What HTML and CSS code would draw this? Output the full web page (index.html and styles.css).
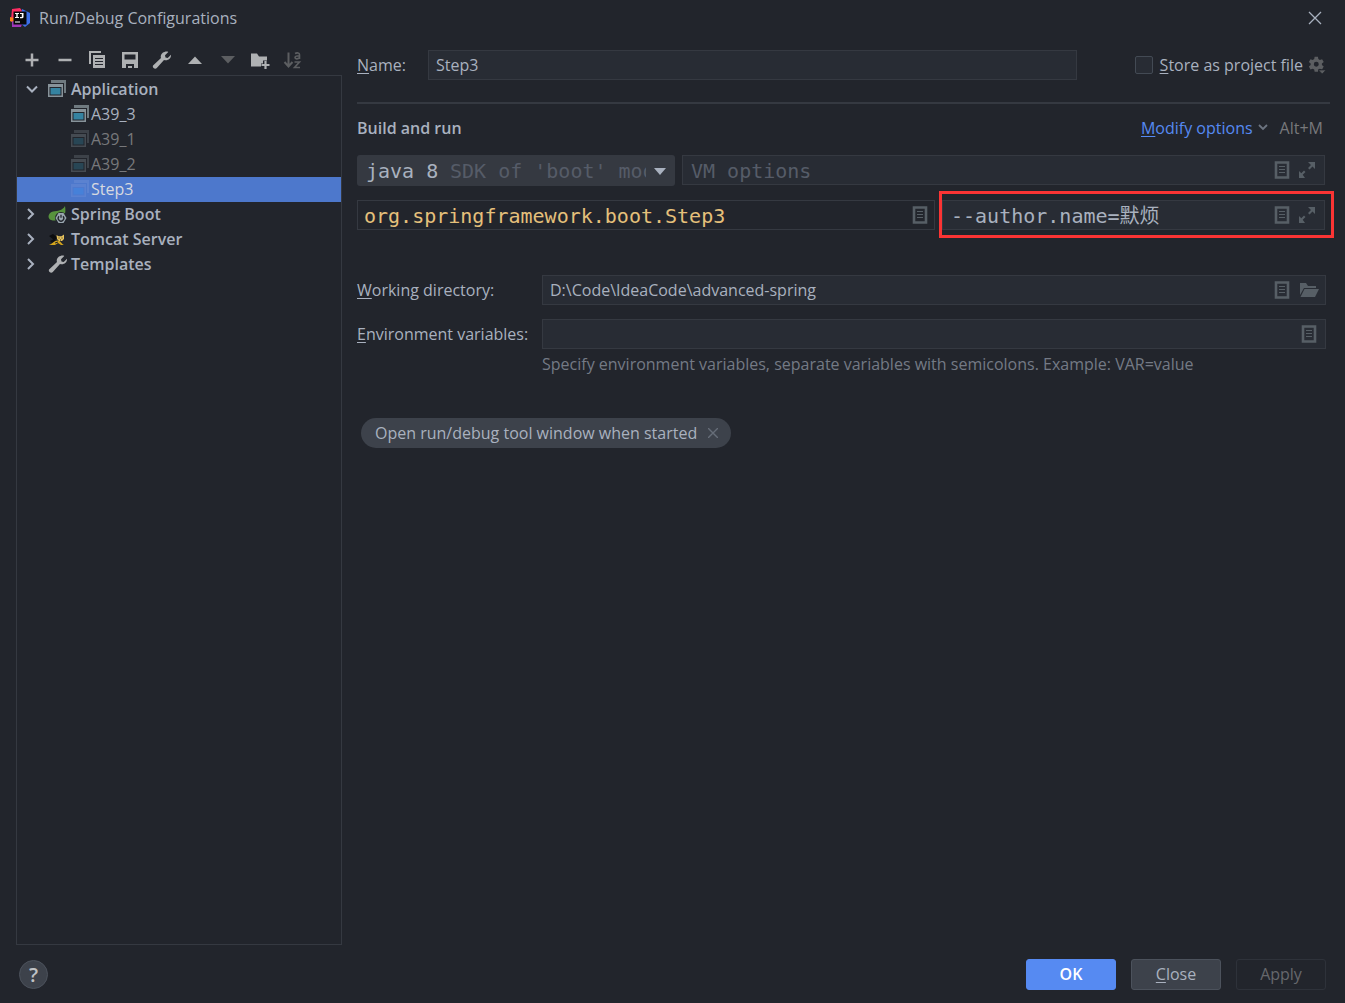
FILE: index.html
```html
<!DOCTYPE html>
<html lang="en">
<head>
<meta charset="utf-8">
<title>Run/Debug Configurations</title>
<link rel="stylesheet" href="styles.css">
</head>
<body>
<svg class="sprite" aria-hidden="true">
  <symbol id="i-doc" viewBox="0 0 20 20"><path d="M4 2.500h12v15h-12z" fill="none" stroke="currentColor" stroke-width="2.600"/><path d="M7 6.500h6M7 9.500h6M7 12.500h6" stroke="currentColor" stroke-width="1"/></symbol>
  <symbol id="i-expand" viewBox="0 0 20 20"><path d="M11 2h7v7l-2.500-2.500-3 3-1.500-1.500 3-3zM2 18v-7l2.300 2.300 2.700-2.800 1.500 1.500-2.800 2.700L8 18z" fill="currentColor"/></symbol>
  <symbol id="i-folder" viewBox="0 0 20 20"><path d="M1 15V3h6l2 3h8v2H5z" fill="currentColor"/><path d="M5.500 9H20l-4 8H1.500z" fill="currentColor"/></symbol>
  <symbol id="i-wrench" viewBox="0 0 20 20"><path d="M13.500 2C15 1.300 16.500 1.500 17.300 2l-3.300 3.300.5 2.200 2.200.5L20 4.800c.4 4-3.500 6.500-7 5.200L5.800 18c-1.800 2-5.300-.8-3.500-2.800L10 8C9 5.500 10.800 2.600 13.500 2z" transform="translate(-1 0)" fill="currentColor"/></symbol>
  <symbol id="i-app" viewBox="0 0 20 20"><path d="M3 1h15v13h-2V4H3z" fill="#6f7a80"/><path d="M0 5h15v13H0z" fill="#87939a"/><path d="M1.500 8h12v8.500h-12z" fill="#22252c"/><path d="M2.500 9h10v6.500h-10z" fill="#3583a1"/></symbol>
  <symbol id="i-app-sel" viewBox="0 0 20 20"><path d="M3 1h15v13h-2V4H3z" fill="#5b82d0"/><path d="M0 5h15v13H0z" fill="#5a81d0"/><path d="M1.500 8h12v8.500h-12z" fill="#4e79ce"/><path d="M2.500 9h10v6.500h-10z" fill="#4681d9"/></symbol>
  <symbol id="i-right" viewBox="0 0 16 16"><path d="M4 3l5 5-5 5" fill="none" stroke="currentColor" stroke-width="2"/></symbol>
  <symbol id="i-down" viewBox="0 0 16 16"><path d="M3 5.500l5 5 5-5" fill="none" stroke="currentColor" stroke-width="2"/></symbol>
</svg>

<header class="titlebar">
  <svg class="logo" viewBox="0 0 20 20" aria-hidden="true">
    <path d="M2 1l8-1 5 7-8 8-6-3z" fill="#fe2d63"/><path d="M12 1l8 4v10l-5 4-5-4z" fill="#3d6fe8"/><path d="M0 9l4 1v5l-4-2z" fill="#fc801d"/><path d="M2 13l10 3-1 3-9 0z" fill="#a037b8"/>
    <path d="M3.500 3.500h13v13h-13z" fill="#08080a"/><path d="M5 5h4v1H7.700v3H9v1H5V9h1.300V6H5zM10 5h3.500v4q0 1.200-1.500 1.200h-2V9h1.800V6H10zM5 13.500h5v1H5z" fill="#fff"/>
  </svg>
  <h1 class="title">Run/Debug Configurations</h1>
  <button class="icon-btn close" aria-label="Close window"><svg viewBox="0 0 14 14"><path d="M1 1l12 12M13 1L1 13" stroke="currentColor" stroke-width="1.300"/></svg></button>
</header>

<main class="main">
  <aside class="side">
    <div class="toolbar">
      <button class="icon-btn" aria-label="Add"><svg viewBox="0 0 20 20"><path d="M10 3.500v13M3.500 10h13" stroke="currentColor" stroke-width="2.500"/></svg></button>
      <button class="icon-btn" aria-label="Remove"><svg viewBox="0 0 20 20"><path d="M3.500 10h13" stroke="currentColor" stroke-width="2.500"/></svg></button>
      <button class="icon-btn" aria-label="Copy"><svg viewBox="0 0 20 20"><path d="M2 1h12v2H4v11H2z" fill="currentColor"/><path d="M6 5h12v13H6zM8 8v1h8V8zM8 11v1h8v-1zM8 14v1h8v-1z" fill="currentColor" fill-rule="evenodd"/></svg></button>
      <button class="icon-btn" aria-label="Save"><svg viewBox="0 0 20 20"><path d="M2 2h16v16H2zM4.500 4.500v5h11v-5zM6 14v4h2v-2h4v2h2v-4z" fill="currentColor" fill-rule="evenodd"/></svg></button>
      <button class="icon-btn" aria-label="Edit templates"><svg><use href="#i-wrench"/></svg></button>
      <button class="icon-btn" aria-label="Move up"><svg viewBox="0 0 20 20"><path d="M3 14l7-7.500 7 7.500z" fill="currentColor"/></svg></button>
      <button class="icon-btn" aria-label="Move down" disabled><svg viewBox="0 0 20 20"><path d="M3 6l7 7.500L17 6z" fill="currentColor"/></svg></button>
      <button class="icon-btn" aria-label="New folder"><svg viewBox="0 0 20 20"><path d="M1 3.500h6l2 3h8v4h-4v3h-2v3H1z" fill="currentColor"/><path d="M15.500 11v8M11.500 15h8" stroke="currentColor" stroke-width="2.200"/></svg></button>
      <button class="icon-btn" aria-label="Sort" disabled><svg viewBox="0 0 20 20"><path d="M5.500 2.500v13M1.500 12l4 4.500 4-4.500" fill="none" stroke="currentColor" stroke-width="2"/><path d="M12 3.500c2-1 4.500-.8 4.500 1.200V9M16.500 5.800c-3 0-4.500.5-4.500 1.800 0 1.500 3 1.800 4.500 0M11.500 12h5l-5 5.500h5.500" fill="none" stroke="currentColor" stroke-width="1.600"/></svg></button>
    </div>
    <ul class="tree" role="tree">
      <li class="row group" role="treeitem" aria-expanded="true"><svg class="arrow"><use href="#i-down"/></svg><svg class="kind"><use href="#i-app"/></svg>Application</li>
      <li class="row child" role="treeitem"><svg class="kind"><use href="#i-app"/></svg>A39_3</li>
      <li class="row child temp" role="treeitem"><svg class="kind"><use href="#i-app"/></svg>A39_1</li>
      <li class="row child temp" role="treeitem"><svg class="kind"><use href="#i-app"/></svg>A39_2</li>
      <li class="row child selected" role="treeitem" aria-selected="true"><svg class="kind"><use href="#i-app-sel"/></svg>Step3</li>
      <li class="row group" role="treeitem" aria-expanded="false"><svg class="arrow"><use href="#i-right"/></svg><svg class="kind" viewBox="0 0 20 20"><path d="M17 2c.8 5 .5 8-2 11-2 2.500-7 4.500-12 3C-1 14 0 9 5 7.500 10 6.500 14 7 17 2z" fill="#57933d"/><circle cx="13" cy="14" r="6" fill="#22252c"/><path d="M10.500 9h5l3 5-3 5h-5l-3-5z" fill="#9aa7b0"/><path d="M11 12.300a2.800 2.800 0 1 0 4 0M13 10.800v3" fill="none" stroke="#22252c" stroke-width="1.300"/></svg>Spring Boot</li>
      <li class="row group" role="treeitem" aria-expanded="false"><svg class="arrow"><use href="#i-right"/></svg><svg class="kind" viewBox="0 0 20 20"><path d="M1 7l4-2 5 4-4 2zM2 12l4-2 2 1-4 3z" fill="#0c0d0f"/><path d="M8.500 6l2 1.200h3L16 5.500V10l-2 2h-3l-2-2z" fill="#e8c35c"/><path d="M1 16c3-1 5-4.500 9-4.500 3 .5 3 3 6 4.500h-3l-3-2-3 2H4z" fill="#d3a41c"/><path d="M10.500 9h1M13.500 9h1M12 11h1M7 14l3-1" stroke="#22252c"/></svg>Tomcat Server</li>
      <li class="row group" role="treeitem" aria-expanded="false"><svg class="arrow"><use href="#i-right"/></svg><svg class="kind"><use href="#i-wrench"/></svg>Templates</li>
    </ul>
  </aside>

  <form class="form">
    <div class="name-row">
      <label class="name-label" for="name"><u>N</u>ame:</label>
      <div class="field"><input id="name" type="text" value="Step3"></div>
      <div class="store">
        <input class="check" id="store" type="checkbox"><label for="store"><u>S</u>tore as project file</label>
        <button type="button" class="icon-btn gear" aria-label="Storage settings"><svg viewBox="0 0 20 20"><path fill-rule="evenodd" d="M8 1h4l.5 2.700 1.800 1L17 3.800l2 3.400-2.200 1.800v2L19 12.800l-2 3.400-2.700-.9-1.800 1L12 19H8l-.5-2.700-1.800-1-2.700.9-2-3.400L3.200 11V9L1 7.200l2-3.400 2.700.9 1.800-1zM10 7a3 3 0 1 0 0 6 3 3 0 0 0 0-6z" transform="scale(.92)" fill="currentColor"/><path d="M11.500 15.500H20l-4.200 4.500z" fill="currentColor" stroke="#22252c" stroke-width=".8"/></svg></button>
      </div>
    </div>
    <hr class="rule">
    <div class="section-head">
      <h2 class="section-title">Build and run</h2>
      <a class="modify" href="#options"><u>M</u>odify options</a>
      <svg class="chev" viewBox="0 0 12 12" aria-hidden="true"><path d="M2 3l4 4 4-4" fill="none" stroke="currentColor" stroke-width="1.800"/></svg>
      <span class="shortcut">Alt+M</span>
    </div>
    <div class="run-grid row-jre">
      <div class="combo">
        <select class="combo-select" aria-label="JRE"><option>java 8</option></select>
        <span class="combo-hint">SDK of 'boot' module</span>
        <svg class="combo-arrow" viewBox="0 0 12 8" aria-hidden="true"><path d="M0 1h12L6 8z" fill="currentColor"/></svg>
      </div>
      <div class="field code"><input type="text" placeholder="VM options" aria-label="VM options"><button type="button" class="icon-btn" aria-label="Insert macros"><svg><use href="#i-doc"/></svg></button><button type="button" class="icon-btn" aria-label="Expand"><svg><use href="#i-expand"/></svg></button></div>
    </div>
    <div class="run-grid row-main">
      <div class="field code plain"><input class="main-class" type="text" value="org.springframework.boot.Step3" aria-label="Main class"><button type="button" class="icon-btn" aria-label="Choose class"><svg><use href="#i-doc"/></svg></button></div>
      <div class="field code marked"><input type="text" value="--author.name=默烦" aria-label="Program arguments"><button type="button" class="icon-btn" aria-label="Insert macros"><svg><use href="#i-doc"/></svg></button><button type="button" class="icon-btn" aria-label="Expand"><svg><use href="#i-expand"/></svg></button></div>
    </div>
    <div class="details">
      <label for="dir"><u>W</u>orking directory:</label>
      <div class="field"><input id="dir" type="text" value="D:\Code\IdeaCode\advanced-spring"><button type="button" class="icon-btn" aria-label="Insert macros"><svg><use href="#i-doc"/></svg></button><button type="button" class="icon-btn" aria-label="Browse"><svg><use href="#i-folder"/></svg></button></div>
      <label for="env"><u>E</u>nvironment variables:</label>
      <div class="field"><input id="env" type="text"><button type="button" class="icon-btn" aria-label="Edit variables"><svg><use href="#i-doc"/></svg></button></div>
      <p class="hint">Specify environment variables, separate variables with semicolons. Example: VAR=value</p>
    </div>
    <div class="chip">Open run/debug tool window when started<button type="button" class="icon-btn chip-x" aria-label="Remove option"><svg viewBox="0 0 10 10"><path d="M0 0l10 10M10 0L0 10" stroke="currentColor" stroke-width="1.400"/></svg></button></div>
  </form>
</main>

<footer class="footer">
  <button class="help" aria-label="Help">?</button>
  <button class="btn primary">OK</button>
  <button class="btn"><u>C</u>lose</button>
  <button class="btn" disabled>Apply</button>
</footer>
</body>
</html>
```
FILE: styles.css
```css
* { box-sizing: border-box; }

:root {
  --bg: #22252c;
  --field: #282c34;
  --line: #353941;
  --text: #a9b1bf;
  --icon: #575f66;
}

body {
  margin: 0;
  min-height: 100vh;
  display: flex;
  flex-direction: column;
  background: var(--bg);
  color: var(--text);
  font: 16px/24px "Open Sans", "Noto Sans CJK SC", sans-serif;
}

button, input, select { font: inherit; color: inherit; }
u { text-underline-offset: 2px; }
.sprite { display: none; }

.icon-btn {
  display: flex;
  flex: none;
  align-items: center;
  justify-content: center;
  padding: 0;
  border: 0;
  background: none;
}
.icon-btn svg { width: 20px; height: 20px; }

.titlebar {
  display: flex;
  align-items: center;
  height: 36px;
  padding: 0 23px 0 10px;
}
.logo { width: 20px; height: 20px; margin-right: 9px; }
.title { flex: 1; margin: 0; font-size: 16px; font-weight: 400; }
.close svg { width: 14px; height: 14px; }

.main { flex: 1; display: flex; padding-left: 16px; }

.side { flex: none; width: 326px; display: flex; flex-direction: column; }
.toolbar {
  display: grid;
  grid-template-columns: repeat(9, 1fr);
  height: 39px;
  padding: 9px 33px 0 0;
  color: #afb1b3;
}
.toolbar .icon-btn:disabled { color: #5c5e61; }
.tree {
  flex: 1;
  margin: 0;
  padding: 1px 0;
  border: 1px solid var(--line);
  list-style: none;
}
.row { display: flex; align-items: center; height: 25px; padding: 0 0 1px 7px; }
.group { font-weight: 600; }
.child { padding-left: 54px; }
.temp { color: #77787b; }
.temp .kind { opacity: 0.35; }
.selected { background: #4d78cc; color: #d7dae0; }
.arrow { width: 16px; height: 16px; margin-right: 8px; }
.kind { width: 20px; height: 20px; color: #afb1b3; }
.group .kind { margin-right: 3px; }

.form { flex: 1; min-width: 0; padding: 14px 15px 0; }

.field {
  display: flex;
  align-items: center;
  min-width: 0;
  height: 30px;
  padding-right: 6px;
  gap: 7px;
  border: 1px solid var(--line);
  background: var(--field);
  color: var(--text);
}
.field input {
  flex: 1;
  min-width: 0;
  height: 28px;
  padding: 0 0 0 7px;
  border: 0;
  outline: 0;
  background: none;
}
.field .icon-btn { color: var(--icon); }
.code { gap: 5px; padding-right: 7px; }
.code, .combo { font: 20px/28px "DejaVu Sans Mono", "Noto Sans CJK SC", monospace; }
.code input { padding: 1px 0 0 8px; }
.code input::placeholder { color: #565c68; opacity: 1; }
.plain { padding-right: 4px; background: var(--bg); }
.plain .main-class { padding: 2px 0 0 6px; color: #e5c07b; }

.name-row { display: flex; align-items: center; padding-right: 4px; }
.name-label { width: 71px; }
.name-row .field { flex: 1; }
.store { display: flex; align-items: center; margin-left: 58px; }
.check {
  appearance: none;
  width: 18px;
  height: 18px;
  margin: 0 7px 0 0;
  border: 1px solid #434a54;
  border-radius: 2px;
  background: var(--field);
}
.gear { margin-left: 5px; color: #5c5e61; }
.gear svg { width: 18px; height: 18px; }

.rule { height: 2px; margin: 22px 0 12px; border: 0; background: var(--line); }

.section-head { display: flex; align-items: center; padding-right: 7px; }
.section-title { flex: 1; margin: 0; font-size: 16px; font-weight: 600; }
.modify { color: #568af2; text-decoration: none; }
.chev { width: 12px; height: 12px; margin: 0 11px 0 4px; color: #6c7480; }
.shortcut { color: #77787b; }

.run-grid { display: grid; gap: 7px; padding-right: 5px; }
.row-jre { grid-template-columns: minmax(0, 318fr) minmax(0, 643fr); margin-top: 15px; }
.row-main { grid-template-columns: minmax(0, 578fr) minmax(0, 383fr); margin-top: 14px; }

.combo {
  display: grid;
  grid-template-columns: 93px minmax(0, 1fr) 12px;
  align-items: center;
  height: 31px;
  padding-right: 9px;
  border-radius: 3px;
  background: #353941;
}
.combo-select {
  grid-area: 1 / 1 / 2 / 4;
  appearance: none;
  height: 31px;
  padding: 0 0 0 9px;
  border: 0;
  background: none;
}
.combo-hint {
  grid-area: 1 / 2;
  margin-right: 8px;
  overflow: hidden;
  white-space: nowrap;
  color: #565c68;
  pointer-events: none;
}
.combo-arrow { grid-area: 1 / 3; width: 12px; height: 8px; pointer-events: none; }

/* Red callout frame drawn over the program arguments field */
.marked { position: relative; }
.marked::after {
  content: "";
  position: absolute;
  inset: -10px -10px -9px -4px;
  border: 3px solid #fb3434;
  pointer-events: none;
}

.details {
  display: grid;
  grid-template-columns: 185px minmax(0, 1fr);
  align-items: center;
  row-gap: 14px;
  margin-top: 45px;
  padding-right: 4px;
}
.hint { grid-column: 2; margin: -11px 0 0; color: #747a85; }

.chip {
  display: inline-flex;
  align-items: center;
  height: 30px;
  margin: 42px 0 0 4px;
  padding: 0 13px 0 14px;
  border-radius: 15px;
  background: #3d424b;
}
.chip-x { margin-left: 11px; color: #666d78; }
.chip-x svg { width: 10px; height: 10px; }

.footer {
  display: flex;
  align-items: center;
  gap: 15px;
  height: 58px;
  padding: 0 19px;
}
.help {
  width: 29px;
  height: 29px;
  margin-right: auto;
  padding: 0;
  border: 1px solid #4c525c;
  border-radius: 50%;
  background: #3d424b;
  color: #c0c2c5;
  font-size: 20px;
  font-weight: 600;
  line-height: 27px;
}
.btn {
  width: 90px;
  height: 31px;
  padding: 0;
  border: 1px solid #4c525c;
  border-radius: 3px;
  background: #3d424b;
}
.primary { border-color: #568af2; background: #568af2; color: #fff; font-weight: 600; }
.btn:disabled { border-color: #2e323a; background: none; color: #66686c; }
```
